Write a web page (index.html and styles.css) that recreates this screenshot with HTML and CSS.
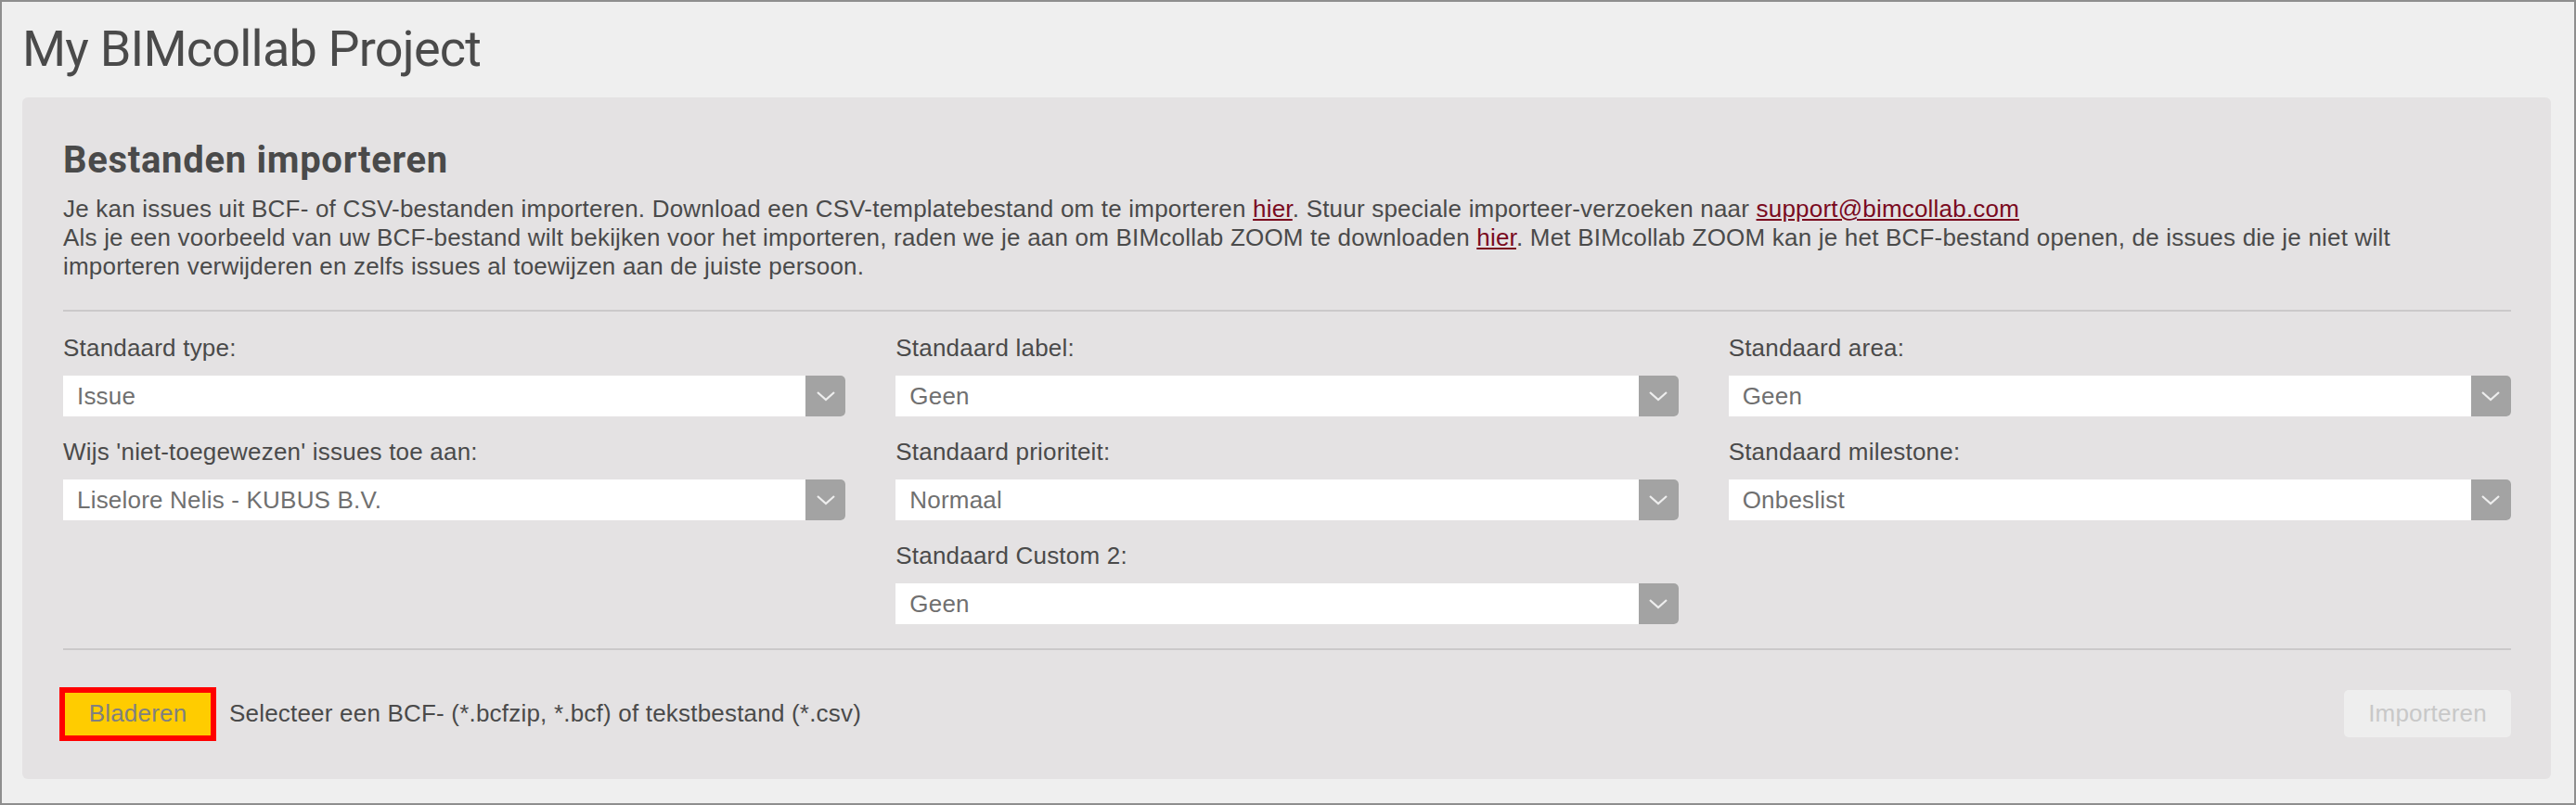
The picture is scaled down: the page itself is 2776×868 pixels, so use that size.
FILE: index.html
```html
<!DOCTYPE html>
<html lang="nl">
<head>
<meta charset="utf-8">
<title>My BIMcollab Project</title>
<link rel="stylesheet" href="styles.css">
</head>
<body>
<div class="page">
  <h1 class="page-title">My BIMcollab Project</h1>
  <section class="card">
    <h2 class="card-title">Bestanden importeren</h2>
    <p class="intro">Je kan issues uit BCF- of CSV-bestanden importeren. Download een CSV-templatebestand om te importeren <a href="#">hier</a>. Stuur speciale importeer-verzoeken naar <a href="#">support@bimcollab.com</a><br>Als je een voorbeeld van uw BCF-bestand wilt bekijken voor het importeren, raden we je aan om BIMcollab ZOOM te downloaden <a href="#">hier</a>. Met BIMcollab ZOOM kan je het BCF-bestand openen, de issues die je niet wilt<br>importeren verwijderen en zelfs issues al toewijzen aan de juiste persoon.</p>
    <hr class="divider">
    <div class="fields">
      <div class="field">
        <div class="field-label">Standaard type:</div>
        <div class="select"><span class="select-value">Issue</span><span class="select-arrow"><svg width="22" height="12" viewBox="0 0 22 12"><path d="M2 2 L11 10 L20 2" fill="none" stroke="#eeeeee" stroke-width="2.2"/></svg></span></div>
      </div>
      <div class="field">
        <div class="field-label">Standaard label:</div>
        <div class="select"><span class="select-value">Geen</span><span class="select-arrow"><svg width="22" height="12" viewBox="0 0 22 12"><path d="M2 2 L11 10 L20 2" fill="none" stroke="#eeeeee" stroke-width="2.2"/></svg></span></div>
      </div>
      <div class="field">
        <div class="field-label">Standaard area:</div>
        <div class="select"><span class="select-value">Geen</span><span class="select-arrow"><svg width="22" height="12" viewBox="0 0 22 12"><path d="M2 2 L11 10 L20 2" fill="none" stroke="#eeeeee" stroke-width="2.2"/></svg></span></div>
      </div>
      <div class="field">
        <div class="field-label">Wijs 'niet-toegewezen' issues toe aan:</div>
        <div class="select"><span class="select-value">Liselore Nelis - KUBUS B.V.</span><span class="select-arrow"><svg width="22" height="12" viewBox="0 0 22 12"><path d="M2 2 L11 10 L20 2" fill="none" stroke="#eeeeee" stroke-width="2.2"/></svg></span></div>
      </div>
      <div class="field">
        <div class="field-label">Standaard prioriteit:</div>
        <div class="select"><span class="select-value">Normaal</span><span class="select-arrow"><svg width="22" height="12" viewBox="0 0 22 12"><path d="M2 2 L11 10 L20 2" fill="none" stroke="#eeeeee" stroke-width="2.2"/></svg></span></div>
      </div>
      <div class="field">
        <div class="field-label">Standaard milestone:</div>
        <div class="select"><span class="select-value">Onbeslist</span><span class="select-arrow"><svg width="22" height="12" viewBox="0 0 22 12"><path d="M2 2 L11 10 L20 2" fill="none" stroke="#eeeeee" stroke-width="2.2"/></svg></span></div>
      </div>
      <div class="field field-col2">
        <div class="field-label">Standaard Custom 2:</div>
        <div class="select"><span class="select-value">Geen</span><span class="select-arrow"><svg width="22" height="12" viewBox="0 0 22 12"><path d="M2 2 L11 10 L20 2" fill="none" stroke="#eeeeee" stroke-width="2.2"/></svg></span></div>
      </div>
    </div>
    <hr class="divider divider-bottom">
    <div class="actions">
      <button class="btn-browse" type="button">Bladeren</button>
      <span class="hint">Selecteer een BCF- (*.bcfzip, *.bcf) of tekstbestand (*.csv)</span>
      <button class="btn-import" type="button" disabled>Importeren</button>
    </div>
  </section>
</div>
</body>
</html>
```

FILE: styles.css
```css
* { box-sizing: border-box; }

html, body {
  margin: 0;
  padding: 0;
}

body {
  font-family: "Liberation Sans", Arial, sans-serif;
  color: #4a4a4a;
  background: #efefef;
}

.page {
  width: 2776px;
  height: 868px;
  border: 2px solid #8e8e8e;
  background: #efefef;
  padding: 0 25px 0 22px;
}

.page-title {
  margin: 0 0 25px 0;
  padding-top: 24px;
  font-family: "Roboto", sans-serif;
  font-weight: 400;
  font-size: 54px;
  line-height: 54px;
  letter-spacing: -0.8px;
  color: #4a4a4a;
}

.card {
  background: #e4e2e3;
  border-radius: 6px;
  padding: 48px 43px 41px 44px;
}

.card-title {
  margin: 0 0 17px 0;
  font-family: "Roboto", sans-serif;
  font-weight: 700;
  font-size: 40px;
  line-height: 40px;
  letter-spacing: 0.7px;
  color: #4a4a4a;
}

.intro {
  margin: 0;
  font-size: 26px;
  line-height: 31px;
  letter-spacing: 0.2px;
  color: #4a4a4a;
}

.intro a {
  color: #7a0a1e;
  text-decoration: underline;
}

.divider {
  margin: 30.5px 0 24.5px 0;
  border: 0;
  height: 2px;
  background: #cbc9ca;
}

.divider-bottom {
  margin: 26px 0 40px 0;
}

.fields {
  display: grid;
  grid-template-columns: repeat(3, 1fr);
  column-gap: 54px;
  row-gap: 23.5px;
}

.field-col2 {
  grid-column: 2;
}

.field-label {
  font-size: 26px;
  line-height: 31px;
  letter-spacing: 0.2px;
  margin-bottom: 13.5px;
  color: #4a4a4a;
}

.select {
  display: flex;
  height: 44px;
  background: #ffffff;
  border-radius: 0 5px 5px 0;
}

.select-value {
  flex: 1;
  padding-left: 15px;
  font-size: 26px;
  line-height: 44px;
  letter-spacing: 0.2px;
  color: #707070;
  white-space: nowrap;
}

.select-arrow {
  width: 43px;
  background: #a3a3a3;
  border-radius: 0 5px 5px 0;
  display: flex;
  align-items: center;
  justify-content: center;
}

.actions {
  display: flex;
  align-items: center;
  height: 58px;
}

.btn-browse {
  margin-left: 2px;
  width: 157px;
  height: 46px;
  border: 0;
  outline: 6px solid #ff0000;
  background: #ffcc00;
  font-family: "Liberation Sans", Arial, sans-serif;
  font-size: 26px;
  letter-spacing: 0.2px;
  color: #808080;
  padding: 0;
}

.hint {
  margin-left: 20px;
  font-size: 26px;
  letter-spacing: 0.2px;
  color: #4a4a4a;
}

.btn-import {
  margin-left: auto;
  width: 180px;
  height: 51px;
  border: 0;
  border-radius: 5px;
  background: #eeeeee;
  font-family: "Liberation Sans", Arial, sans-serif;
  font-size: 26px;
  letter-spacing: 0.2px;
  color: #c8c8c8;
  padding: 0;
}
```
